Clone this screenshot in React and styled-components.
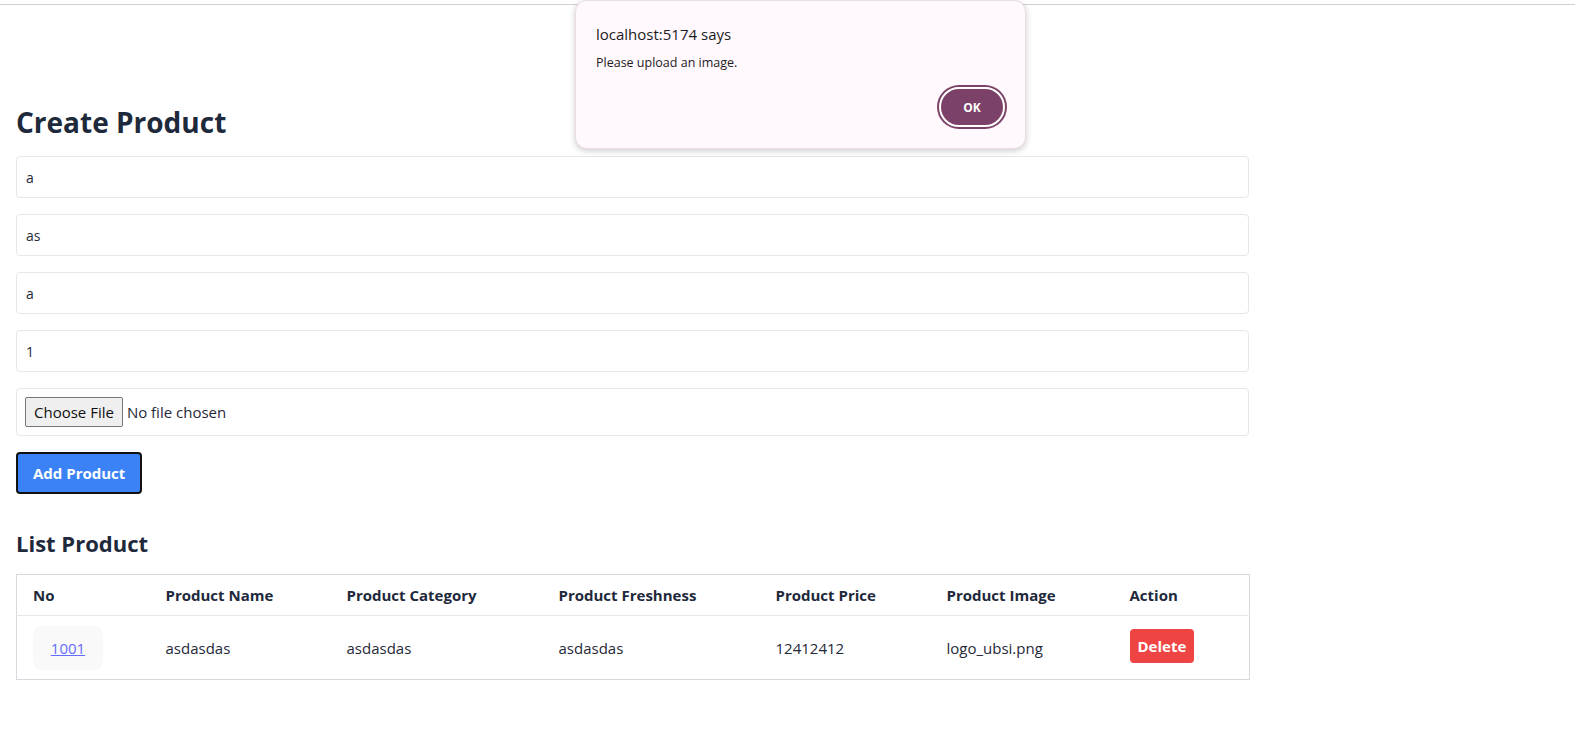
import styled, { createGlobalStyle } from "styled-components";

const GlobalStyle = createGlobalStyle`
    body {
        margin: 0;
        background: #ffffff;
        font-family: "Open Sans", "Noto Sans", sans-serif;
        color: #1f2937;
    }
`;

const products = [
    { id: 1001, name: "asdasdas", category: "asdasdas", freshness: "asdasdas", price: "12412412", image: "logo_ubsi.png" },
];

const columns = [
    { label: "No", width: 133 },
    { label: "Product Name", width: 181 },
    { label: "Product Category", width: 212 },
    { label: "Product Freshness", width: 217 },
    { label: "Product Price", width: 171 },
    { label: "Product Image", width: 183 },
    { label: "Action", width: 136 },
];

function App() {
    return (
        <>
            <GlobalStyle />
            <TopEdge />
            <Page>
                <Title>Create Product</Title>
                <Form onSubmit={(e) => e.preventDefault()}>
                    <TextInput type="text" defaultValue="a" />
                    <TextInput type="text" defaultValue="as" />
                    <TextInput type="text" defaultValue="a" />
                    <TextInput type="number" defaultValue="1" />
                    <FileBox>
                        <FakeFileButton type="button">Choose File</FakeFileButton>
                        <FileLabel>No file chosen</FileLabel>
                    </FileBox>
                    <AddButton type="submit">Add Product</AddButton>
                </Form>

                <Subtitle>List Product</Subtitle>
                <Table>
                    <thead>
                        <tr>
                            {columns.map((c) => (
                                <Th key={c.label} $width={c.width}>{c.label}</Th>
                            ))}
                        </tr>
                    </thead>
                    <tbody>
                        {products.map((p) => (
                            <tr key={p.id}>
                                <Td>
                                    <IdButton type="button">
                                        <IdLink href="#">{p.id}</IdLink>
                                    </IdButton>
                                </Td>
                                <Td>{p.name}</Td>
                                <Td>{p.category}</Td>
                                <Td>{p.freshness}</Td>
                                <Td>{p.price}</Td>
                                <Td>{p.image}</Td>
                                <Td>
                                    <DeleteButton type="button">Delete</DeleteButton>
                                </Td>
                            </tr>
                        ))}
                    </tbody>
                </Table>
            </Page>

            <Dialog>
                <DialogTitle>localhost:5174 says</DialogTitle>
                <DialogMessage>Please upload an image.</DialogMessage>
                <DialogActions>
                    <OkButton type="button">OK</OkButton>
                </DialogActions>
            </Dialog>
        </>
    );
}

export default App;

// Styles

const TopEdge = styled.div`
    height: 4px;
    border-bottom: 1px solid #d0d0d0;
`;

const Page = styled.main`
    width: 1233px;
    padding: 0 16px;
`;

const Title = styled.h1`
    margin: 98px 0 15px;
    font-size: 28px;
    line-height: 38px;
    font-weight: 700;
    color: #1e293b;
`;

const Form = styled.form`
    display: flex;
    flex-direction: column;
    align-items: flex-start;
    gap: 16px;
`;

const TextInput = styled.input`
    box-sizing: border-box;
    width: 100%;
    height: 42px;
    padding: 0 9px;
    border: 1px solid #e5e7eb;
    border-radius: 4px;
    font-family: inherit;
    font-size: 14px;
    color: #1f2937;
    outline: none;
    appearance: textfield;

    &::-webkit-inner-spin-button,
    &::-webkit-outer-spin-button {
        -webkit-appearance: none;
        margin: 0;
    }
`;

const FileBox = styled.div`
    box-sizing: border-box;
    width: 100%;
    height: 48px;
    padding: 0 8px;
    display: flex;
    align-items: center;
    gap: 4px;
    border: 1px solid #e5e7eb;
    border-radius: 4px;
`;

const FakeFileButton = styled.button`
    height: 30px;
    padding: 0 8px;
    border: 1px solid #767676;
    border-radius: 2px;
    background: #efefef;
    font-family: inherit;
    font-size: 15px;
    color: #111;
`;

const FileLabel = styled.span`
    font-size: 15px;
    color: #1f2937;
`;

const AddButton = styled.button`
    height: 42px;
    padding: 0 15px;
    border: 2px solid #111;
    border-radius: 4px;
    background: #3b82f6;
    color: #fff;
    font-family: inherit;
    font-size: 15px;
    font-weight: 700;
`;

const Subtitle = styled.h2`
    margin: 34px 0 16px;
    font-size: 22px;
    line-height: 30px;
    font-weight: 700;
    color: #1e293b;
`;

const Table = styled.table`
    width: 100%;
    border-collapse: collapse;
    border: 1px solid #d8d8de;
    table-layout: fixed;
`;

const Th = styled.th`
    box-sizing: border-box;
    width: ${(p) => p.$width}px;
    height: 41px;
    padding: 0 16px;
    text-align: left;
    font-size: 15px;
    font-weight: 700;
    color: #1e293b;
    border-bottom: 1px solid #e5e7eb;
`;

const Td = styled.td`
    height: 63px;
    padding: 0 16px;
    font-size: 15px;
    color: #1f2937;
`;

const IdButton = styled.button`
    width: 70px;
    height: 44px;
    border: 1px solid transparent;
    border-radius: 8px;
    background: #f9f9f9;
    font-family: inherit;
    font-size: 15px;
    font-weight: 500;
`;

const IdLink = styled.a`
    color: #646cff;
    text-decoration: underline;
`;

const DeleteButton = styled.button`
    height: 34px;
    margin-bottom: 3px;
    padding: 0 8px;
    border: none;
    border-radius: 4px;
    background: #ef4444;
    color: #fff;
    font-family: inherit;
    font-size: 15px;
    font-weight: 700;
`;

const Dialog = styled.div`
    position: absolute;
    top: 0;
    left: 575px;
    box-sizing: border-box;
    width: 451px;
    height: 149px;
    padding: 23px 20px 18px;
    background: #fff8fc;
    border: 1px solid #eadde5;
    border-radius: 12px;
    box-shadow: 0 2px 6px rgba(0, 0, 0, 0.2);
`;

const DialogTitle = styled.div`
    font-size: 15px;
    font-weight: 500;
    color: #1d1b1e;
    line-height: 20px;
`;

const DialogMessage = styled.div`
    margin-top: 11px;
    font-size: 12.5px;
    color: #1d1b1e;
    line-height: 16px;
`;

const DialogActions = styled.div`
    display: flex;
    justify-content: flex-end;
    margin-top: 16px;
`;

const OkButton = styled.button`
    width: 66px;
    height: 40px;
    margin-right: 0;
    border: 2px solid #ffffff;
    border-radius: 20px;
    background: #7b4169;
    box-shadow: 0 0 0 2px #7b4169;
    color: #fff;
    font-family: inherit;
    font-size: 12px;
    font-weight: 700;
`;
